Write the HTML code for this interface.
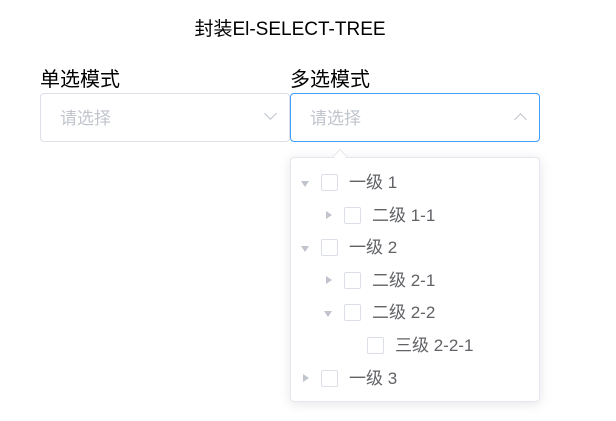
<!DOCTYPE html>
<html><head><meta charset="utf-8"><style>
body{margin:0;width:616px;height:421px;background:#fff;font-family:"Liberation Sans","Noto Sans CJK SC",sans-serif;position:relative;overflow:hidden}
.a{position:absolute}
.title{left:0;width:580px;top:19px;text-align:center;font-size:19px;color:#000;line-height:22px}
.lbl{font-size:20px;color:#000;top:69px;line-height:22px}
.sel{top:93px;height:47px;width:248px;border:1px solid #dcdfe6;border-radius:4px;box-sizing:content-box}
.sel span{position:absolute;left:19px;top:14px;font-size:17px;color:#c0c4cc;line-height:22px}
.chev{position:absolute;right:14px;top:18px;width:8px;height:8px;border-right:1.5px solid #c0c4cc;border-bottom:1.5px solid #c0c4cc;transform:rotate(45deg)}
.dd{left:290px;top:157px;width:248px;height:243px;border:1px solid #e4e7ed;border-radius:4px;box-shadow:0 2px 12px rgba(0,0,0,.1);background:#fff}
.row{position:absolute;height:24px;font-size:17px;color:#606266;line-height:24px}
.tri{position:absolute;width:0;height:0}
.down{border-left:4.5px solid transparent;border-right:4.5px solid transparent;border-top:6px solid #c0c4cc;top:10px}
.right{border-top:4.5px solid transparent;border-bottom:4.5px solid transparent;border-left:6px solid #c0c4cc;top:7px}
.cb{position:absolute;top:3px;width:17px;height:17px;border:1px solid #dcdfe6;border-radius:2px;box-sizing:border-box;background:#fff}
.row span{position:absolute;left:49px;white-space:nowrap;top:0}
</style></head><body>
<div class="a title">封装El-SELECT-TREE</div>
<div class="a lbl" style="left:40px">单选模式</div>
<div class="a lbl" style="left:290px">多选模式</div>
<div class="a sel" style="left:40px"><span>请选择</span><div class="chev" style="top:15px"></div></div>
<div class="a sel" style="left:290px;border-color:#409eff"><span>请选择</span><div class="chev" style="top:21px;transform:rotate(225deg)"></div></div>
<div class="a" style="left:335px;top:151px;width:9px;height:9px;background:#fff;border-left:1px solid #e4e7ed;border-top:1px solid #e4e7ed;transform:rotate(45deg);z-index:2"></div>
<div class="a dd"></div>
<div style="position:absolute;left:0;top:1px">
<div class="row" style="top:170px;left:300px"><i class="tri down" style="left:1px"></i><i class="cb" style="left:21px"></i><span>一级 1</span></div>
<div class="row" style="top:203px;left:323px"><i class="tri right" style="left:3px"></i><i class="cb" style="left:21px"></i><span>二级 1-1</span></div>
<div class="row" style="top:235px;left:300px"><i class="tri down" style="left:1px"></i><i class="cb" style="left:21px"></i><span>一级 2</span></div>
<div class="row" style="top:268px;left:323px"><i class="tri right" style="left:3px"></i><i class="cb" style="left:21px"></i><span>二级 2-1</span></div>
<div class="row" style="top:300px;left:323px"><i class="tri down" style="left:1px"></i><i class="cb" style="left:21px"></i><span>二级 2-2</span></div>
<div class="row" style="top:333px;left:346px"><i class="cb" style="left:21px"></i><span>三级 2-2-1</span></div>
<div class="row" style="top:366px;left:300px"><i class="tri right" style="left:3px"></i><i class="cb" style="left:21px"></i><span>一级 3</span></div>
</div>
</body></html>
